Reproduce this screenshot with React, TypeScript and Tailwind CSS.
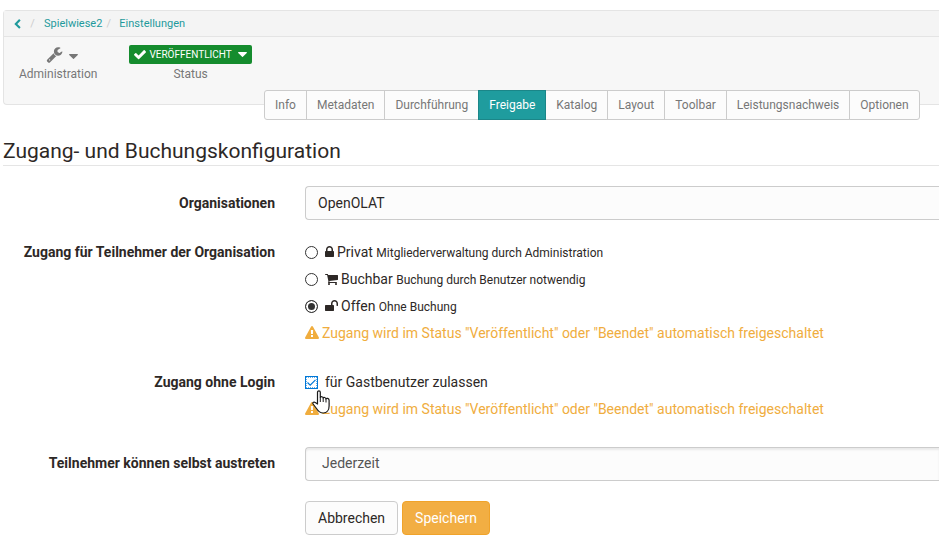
import React, { useState } from "react";

const glyphs = {
  lock: {
    box: "320 0 1152 1792",
    path: "M640 768h512v-192q0-106-75-181t-181-75-181 75-75 181v192zm832 96v576q0 40-28 68t-68 28h-960q-40 0-68-28t-28-68v-576q0-40 28-68t68-28h32v-192q0-184 132-316t316-132 316 132 132 316v192h32q40 0 68 28t28 68z",
  },
  unlock: {
    box: "64 0 1664 1792",
    path: "M1728 576v256q0 26-19 45t-45 19h-64q-26 0-45-19t-19-45v-256q0-106-75-181t-181-75-181 75-75 181v192h96q40 0 68 28t28 68v576q0 40-28 68t-68 28h-960q-40 0-68-28t-28-68v-576q0-40 28-68t68-28h672v-192q0-185 131.500-316.500t316.500-131.500 316.500 131.500 131.500 316.500z",
  },
  cart: {
    box: "64 0 1664 1792",
    path: "M704 1536q0 52-38 90t-90 38-90-38-38-90 38-90 90-38 90 38 38 90zm896 0q0 52-38 90t-90 38-90-38-38-90 38-90 90-38 90 38 38 90zm128-1088v512q0 24-16.500 42.500t-40.500 21.500l-1044 122q13 60 13 70 0 16-24 64h920q26 0 45 19t19 45-19 45-45 19h-1024q-26 0-45-19t-19-45q0-11 8-31.500t16-36 21.500-40 15.500-29.500l-177-823h-204q-26 0-45-19t-19-45 19-45 45-19h256q16 0 28.500 6.500t19.500 15.500 13 24.500 8 26 5.500 29.500 4.500 26h1201q26 0 45 19t19 45z",
  },
  wrench: {
    box: "0 0 1792 1792",
    path: "M448 1472q0-26-19-45t-45-19-45 19-19 45 19 45 45 19 45-19 19-45zm644-420l-682 682q-37 37-90 37-52 0-91-37l-106-108q-38-36-38-90 0-53 38-91l681-681q39 98 114.500 173.500t173.500 114.500zm634-435q0 39-23 106-47 134-164.500 217.500t-258.500 83.500q-185 0-316.500-131.500t-131.500-316.500 131.500-316.500 316.500-131.500q58 0 121.500 16.500t107.500 46.500q16 11 16 28t-16 28l-293 169v224l193 107q5-3 79-48.500t135.500-81 70.500-35.500q15 0 23.500 10t8.500 25z",
  },
  warning: {
    box: "0 0 1792 1792",
    path: "M1024 1375v-190q0-14-9.500-23.500t-22.500-9.500h-192q-13 0-22.500 9.500t-9.500 23.500v190q0 14 9.500 23.500t22.500 9.500h192q13 0 22.500-9.500t9.500-23.500zm-2-374l18-459q0-12-10-19-13-11-24-11h-220q-11 0-24 11-10 7-10 21l17 457q0 10 10 16.500t24 6.500h185q14 0 23.500-6.500t10.500-16.500zm-14-934l768 1408q35 63-2 126-17 29-46.500 46t-63.500 17h-1536q-34 0-63.500-17t-46.500-46q-37-63-2-126l768-1408q17-31 47-49t65-18 65 18 47 49z",
  },
  check: {
    box: "121 200 1550 1400",
    path: "M1671 566q0 40-28 68l-724 724-136 136q-28 28-68 28t-68-28l-136-136-362-362q-28-28-28-68t28-68l136-136q28-28 68-28t68 28l294 295 656-657q28-28 68-28t68 28l136 136q28 28 28 68z",
  },
  back: {
    box: "400 0 1060 1700",
    path: "M1427 301l-531 531 531 531q19 19 19 45t-19 45l-166 166q-19 19-45 19t-45-19l-742-742q-19-19-19-45t19-45l742-742q19-19 45-19t45 19l166 166q19 19 19 45t-19 45z",
  },
  caret: {
    box: "384 640 1024 576",
    path: "M1408 704q0 26-19 45l-448 448q-19 19-45 19t-45-19l-448-448q-19-19-19-45t19-45 45-19h896q26 0 45 19t19 45z",
  },
};

function Icon({ name, className }: { name: keyof typeof glyphs; className: string }) {
  return (
    <svg viewBox={glyphs[name].box} className={"shrink-0 " + className} fill="currentColor" aria-hidden="true">
      <path d={glyphs[name].path} />
    </svg>
  );
}

const tabs = [
  "Info",
  "Metadaten",
  "Durchführung",
  "Freigabe",
  "Katalog",
  "Layout",
  "Toolbar",
  "Leistungsnachweis",
  "Optionen",
];

const accessOptions = [
  { id: "private", title: "Privat", hint: "Mitgliederverwaltung durch Administration", icon: <Icon name="lock" className="h-[14px] w-[9px]" /> },
  { id: "bookable", title: "Buchbar", hint: "Buchung durch Benutzer notwendig", icon: <Icon name="cart" className="h-[14px] w-[13px]" /> },
  { id: "open", title: "Offen", hint: "Ohne Buchung", icon: <Icon name="unlock" className="h-[14px] w-[13px]" /> },
];

const rowClass = "grid grid-cols-[272px_1fr] gap-x-[30px]";
const labelClass = "text-right font-bold leading-5";

function Warning() {
  return (
    <p className="flex items-center gap-[3px] leading-5 text-[#f0ad3e]">
      <Icon name="warning" className="h-[14px] w-[14px]" />
      Zugang wird im Status "Veröffentlicht" oder "Beendet" automatisch freigeschaltet
    </p>
  );
}

function HandCursor() {
  return (
    <svg className="pointer-events-none absolute left-[7px] top-[18px] h-6 w-[18px]" viewBox="0 0 18 24" aria-hidden="true">
      <path
        d="M5.500 14V2.200C5.500.3 8.300.3 8.300 2.200V7.500C8.800 6.300 11 6.500 11.200 8c.5-1 2.500-.7 2.700.8.700-.9 3-.5 3.200 1.300v5.900c0 4-2.200 7-5.800 7-3.500 0-5.200-1.800-6.800-4.500L1.100 14c-.8-1.500 1-2.500 2.200-1.400z"
        fill="white"
        stroke="#1a1a1a"
        strokeWidth="1.200"
        strokeLinejoin="round"
      />
      <path d="M8.300 7.500v4.500M11.200 8v4M14 9v3.500" stroke="#1a1a1a" strokeWidth="1" fill="none" />
    </svg>
  );
}

export default function App() {
  const [tab, setTab] = useState("Freigabe");
  const [access, setAccess] = useState("open");
  const [guest, setGuest] = useState(true);

  return (
    <div className="overflow-hidden bg-white pb-4 pl-[3px] pt-[10px] font-[Roboto,sans-serif] text-sm text-[#2d2826]">
      <header className="h-[95px] rounded-l border border-r-0 border-[#e4e4e4] bg-[#f7f7f7]">
        <nav aria-label="Breadcrumb" className="flex h-[26px] items-center border-b border-[#e4e4e4] bg-[#f4f4f4] pl-[10px] text-[11px] text-[#1f9a9c]">
          <a href="#back" aria-label="Zurück"><Icon name="back" className="h-[10px] w-[7px]" /></a>
          <span className="w-[23px] text-center text-[#ccc]">/</span>
          <a href="#course">Spielwiese2</a>
          <span className="w-[17px] pr-1 text-center text-[#ccc]">/</span>
          <a href="#settings">Einstellungen</a>
        </nav>
        <div className="flex items-start gap-8 pl-[15px] pt-2 text-xs text-[#777]">
          <button className="flex flex-col items-center">
            <span className="flex h-[19px] items-center gap-[6px] pl-2">
              <Icon name="wrench" className="h-[17px] w-[17px]" />
              <Icon name="caret" className="mt-1 h-[5px] w-[9px]" />
            </span>
            <span className="leading-5">Administration</span>
          </button>
          <div className="flex flex-col items-center">
            <button className="flex h-[19px] items-center gap-[3px] rounded-xs bg-[#158c2e] px-[5px] text-[10px] text-white">
              <Icon name="check" className="h-[11px] w-3" />
              VERÖFFENTLICHT
              <Icon name="caret" className="ml-[3px] h-[5px] w-[9px]" />
            </button>
            <span className="leading-5">Status</span>
          </div>
        </div>
      </header>

      <nav aria-label="Einstellungen" className="relative -mt-[15px] flex pl-[261px] text-xs">
        {tabs.map((name) => (
          <button
            key={name}
            onClick={() => setTab(name)}
            className={
              "-ml-px h-[30px] border px-[10px] whitespace-nowrap first:ml-0 first:rounded-l-[3px] last:rounded-r-[3px] " +
              (name === tab ? "relative border-[#1b8688] bg-[#1f9c9e] text-white" : "border-[#ccc] bg-[#fcfcfc] text-[#777]")
            }
          >
            {name}
          </button>
        ))}
      </nav>

      <h1 className="mt-[18px] border-b border-[#e5e5e5] pb-px text-[21px] leading-[26px]">
        Zugang- und Buchungskonfiguration
      </h1>

      <form onSubmit={(e) => e.preventDefault()} className="pt-5">
        <div className={rowClass + " mb-[22px]"}>
          <label htmlFor="organisation" className={labelClass + " pt-[7px]"}>Organisationen</label>
          <input
            id="organisation"
            readOnly
            value="OpenOLAT"
            className="h-[34px] w-full rounded-l border border-r-0 border-[#ccc] bg-[#fcfcfc] px-3"
          />
        </div>

        <div className={rowClass + " mb-[29px]"} role="radiogroup" aria-labelledby="access-label">
          <span id="access-label" className={labelClass}>Zugang für Teilnehmer der Organisation</span>
          <div className="flex flex-col gap-[7px]">
            {accessOptions.map((option) => (
              <label key={option.id} className="flex items-center gap-[7px] leading-5">
                <input
                  type="radio"
                  name="access"
                  checked={access === option.id}
                  onChange={() => setAccess(option.id)}
                  className="h-[13px] w-[13px] appearance-none rounded-full border border-[#333] bg-white checked:bg-[#333] checked:shadow-[inset_0_0_0_2px_white]"
                />
                <span className="flex items-center gap-[3px]">
                  {option.icon}
                  <span>
                    {option.title} <span className="text-xs">{option.hint}</span>
                  </span>
                </span>
              </label>
            ))}
            <Warning />
          </div>
        </div>

        <div className={rowClass + " mb-7"}>
          <label htmlFor="guest" className={labelClass}>Zugang ohne Login</label>
          <div className="relative flex flex-col gap-[7px]">
            <label className="flex items-center gap-[7px] leading-5">
              <span className="grid h-[13px] w-[13px] place-items-center">
                <input
                  id="guest"
                  type="checkbox"
                  checked={guest}
                  onChange={() => setGuest(!guest)}
                  className="col-start-1 row-start-1 peer h-[13px] w-[13px] appearance-none border border-[#0078d7] bg-white outline-1 -outline-offset-2 outline-dotted outline-[#6aaee6]"
                />
                <svg viewBox="0 0 13 13" className="pointer-events-none invisible col-start-1 row-start-1 h-[13px] w-[13px] peer-checked:visible" aria-hidden="true">
                  <path d="M2.500 6.500L5.200 9.200L10.500 3.800" fill="none" stroke="#0078d7" strokeWidth="1.200" />
                </svg>
              </span>
              für Gastbenutzer zulassen
            </label>
            <Warning />
            <HandCursor />
          </div>
        </div>

        <div className={rowClass + " mb-5"}>
          <label htmlFor="leave" className={labelClass + " pt-[6px]"}>Teilnehmer können selbst austreten</label>
          <select
            id="leave"
            className="h-[34px] w-full appearance-none rounded-l border border-r-0 border-[#ccc] bg-[#fcfcfc] px-4 pb-[2px] text-[#555] shadow-[inset_0_2px_2px_rgba(0,0,0,0.075)]"
          >
            <option>Jederzeit</option>
          </select>
        </div>

        <div className={rowClass}>
          <div className="col-start-2 flex gap-1">
            <button type="button" className="h-[34px] rounded border border-[#ccc] bg-[#fcfcfc] px-3">Abbrechen</button>
            <button type="submit" className="h-[34px] rounded border border-[#f0a32a] bg-[#f2ae43] px-3 text-white">Speichern</button>
          </div>
        </div>
      </form>
    </div>
  );
}
